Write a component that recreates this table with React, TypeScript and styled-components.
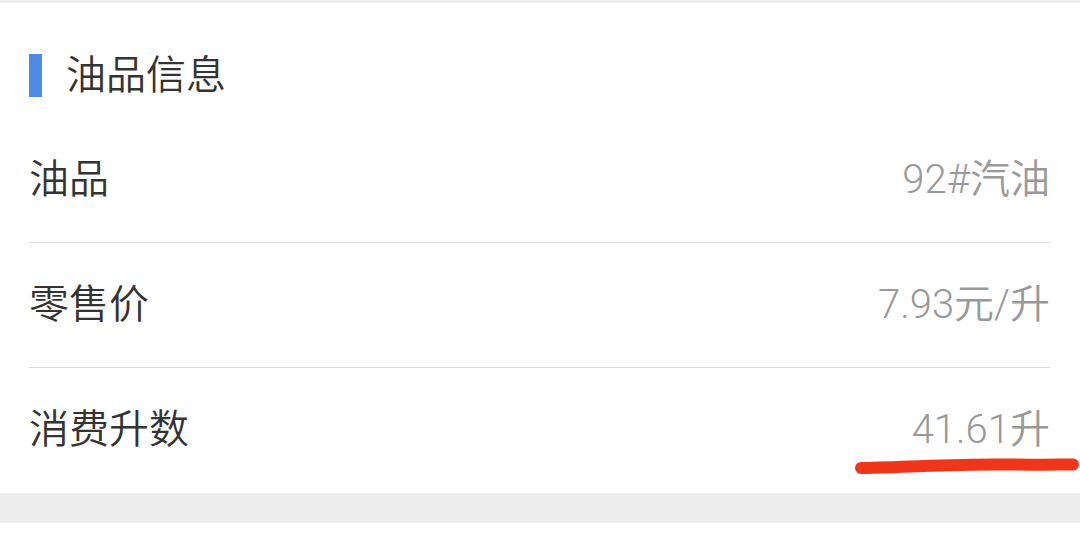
import styled, { createGlobalStyle } from "styled-components"

const GlobalStyle = createGlobalStyle`
  html, body {
    margin: 0;
    padding: 0;
    background: #fff;
    font-family: Roboto, "Noto Sans CJK SC", sans-serif;
  }
`

interface RowData {
  label: string
  value: string
  marked?: boolean
}

const rows: RowData[] = [
  { label: "油品", value: "92#汽油" },
  { label: "零售价", value: "7.93元/升" },
  { label: "消费升数", value: "41.61升", marked: true }
]

function App() {
  return (
    <Page>
      <GlobalStyle />
      <TopGap />
      <Card>
        <TitleRow>
          <TitleBar />
          <TitleText>油品信息</TitleText>
        </TitleRow>
        {rows.map((row, i) => (
          <InfoRow key={row.label} $last={i === rows.length - 1}>
            <Label>{row.label}</Label>
            <Value>
              {row.value}
              {row.marked && (
                <Scribble viewBox="0 0 226 16" width="226" height="16">
                  <path
                    d="M7 10 C 60 9, 100 6, 150 6.5 S 210 6, 219 6.5"
                    fill="none"
                    stroke="#f0361a"
                    strokeWidth="12"
                    strokeLinecap="round"
                  />
                </Scribble>
              )}
            </Value>
          </InfoRow>
        ))}
      </Card>
      <BottomGap />
    </Page>
  )
}

const Page = styled.div`
  width: 1080px;
  display: flex;
  flex-direction: column;
`

const TopGap = styled.div`
  height: 3px;
  background: #ededed;
`

const Card = styled.div`
  background: #fff;
  padding: 0 30px 0 29px;
  display: flex;
  flex-direction: column;
`

const TitleRow = styled.div`
  box-sizing: border-box;
  height: 115px;
  padding-top: 29px;
  display: flex;
  align-items: center;
  gap: 24px;
`

const TitleBar = styled.div`
  width: 13px;
  height: 43px;
  background: #4e8be6;
`

const TitleText = styled.div`
  font-size: 40px;
  font-weight: 350;
  color: #333;
  line-height: 1;
  margin-top: 1px;
`

const InfoRow = styled.div<{ $last: boolean }>`
  height: 124px;
  display: flex;
  align-items: center;
  justify-content: space-between;
  border-bottom: ${(p) => (p.$last ? "1px solid transparent" : "1px solid #dcdcdc")};
`

const Label = styled.div`
  font-size: 40px;
  font-weight: 350;
  color: #333;
  line-height: 1;
`

const Value = styled.div`
  position: relative;
  font-size: 40px;
  font-weight: 350;
  color: #999;
  line-height: 1;
  margin-top: -1px;
`

const Scribble = styled.svg`
  position: absolute;
  right: -30px;
  top: 48px;
`

const BottomGap = styled.div`
  height: 30px;
  background: #ededed;
`

export default App
